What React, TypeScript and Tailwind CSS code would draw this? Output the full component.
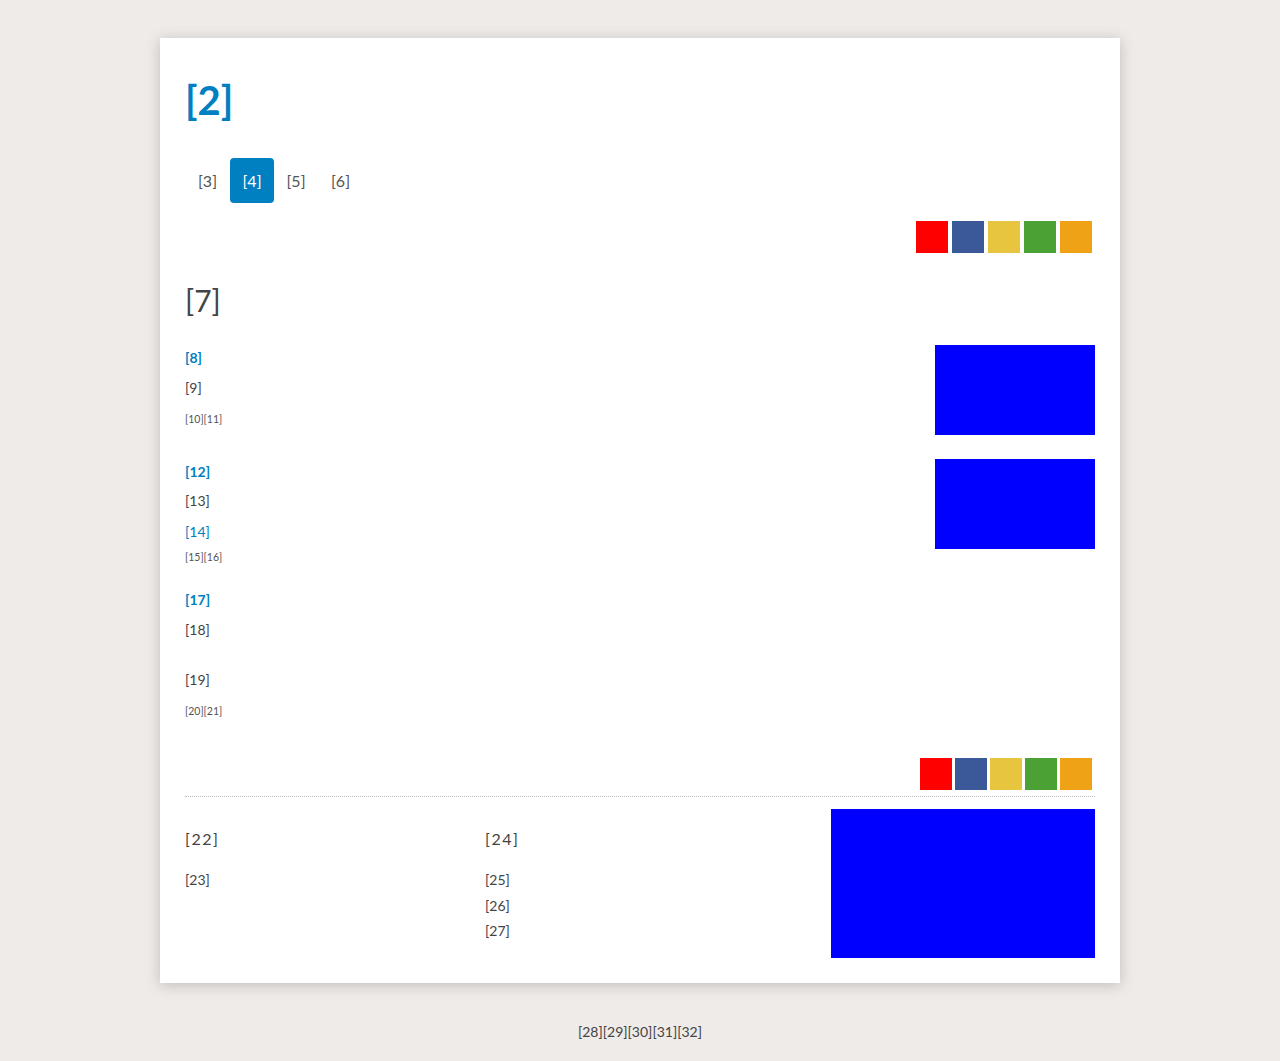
import React from "react";

const swatches = ["bg-[#ff0000]", "bg-[#3b5998]", "bg-[#e8c53f]", "bg-[#4ca134]", "bg-[#f0a216]"];

function Swatches({ gap }: { gap: string }) {
  return (
    <div className={`flex justify-end pr-[3px] ${gap}`}>
      {swatches.map((c) => (
        <span key={c} className={`block w-[32px] h-[32px] ${c}`} />
      ))}
    </div>
  );
}

export default function App() {
  return (
    <div
      className="min-h-screen bg-[#efebe8] pt-[38px] pb-[20px] text-[#444]"
      style={{ fontFamily: "Lato, 'Open Sans', sans-serif" }}
    >
      <div className="mx-auto w-[960px] bg-white px-[25px] pb-[25px] shadow-[0_2px_14px_rgba(0,0,0,0.2)]">
        {/* Title */}
        <h1 className="pt-[38px] text-[40px] font-bold leading-[48px] text-[#0080c0]">[2]</h1>

        {/* Tabs */}
        <nav className="mt-[34px] flex text-[16px] text-[#555]">
          <span className="flex h-[45px] w-[45px] items-center justify-center">[3]</span>
          <span className="flex h-[45px] w-[44px] items-center justify-center rounded-[4px] bg-[#0080c0] text-white">[4]</span>
          <span className="flex h-[45px] w-[44px] items-center justify-center">[5]</span>
          <span className="flex h-[45px] w-[45px] items-center justify-center">[6]</span>
        </nav>

        <div className="mt-[18px]">
          <Swatches gap="gap-[4px]" />
        </div>

        {/* Section heading */}
        <h2 className="mt-[29px] text-[30px] font-normal leading-[36px] text-[#444]">[7]</h2>

        {/* Article 1 */}
        <article className="mt-[27px] flex justify-between">
          <div className="pt-[1px] text-[14px]">
            <p className="leading-[24px] font-bold text-[#0080c0]">[8]</p>
            <p className="mt-[6px] leading-[24px]">[9]</p>
            <p className="mt-[9px] text-[10.5px] leading-[20px] text-[#555]">[10][11]</p>
          </div>
          <div className="h-[90px] w-[160px] bg-[#0000ff]" />
        </article>

        {/* Article 2 */}
        <article className="mt-[24px] flex items-start justify-between">
          <div className="pt-[1px] text-[14px]">
            <p className="leading-[24px] font-bold text-[#0080c0]">[12]</p>
            <p className="mt-[5px] leading-[24px]">[13]</p>
            <p className="mt-[7px] leading-[24px] text-[#0080c0]">[14]</p>
            <p className="mt-[3px] text-[10.5px] leading-[20px] text-[#555]">[15][16]</p>
          </div>
          <div className="h-[90px] w-[160px] bg-[#0000ff]" />
        </article>

        {/* Article 3 */}
        <article className="mt-[21px] text-[14px]">
          <p className="leading-[24px] font-bold text-[#0080c0]">[17]</p>
          <p className="mt-[6px] leading-[24px]">[18]</p>
          <p className="mt-[26px] leading-[24px]">[19]</p>
          <p className="mt-[9px] text-[10.5px] leading-[20px] text-[#555]">[20][21]</p>
        </article>

        <div className="mt-[37px]">
          <Swatches gap="gap-[3px]" />
        </div>

        <div className="mt-[6px] border-t border-dotted border-[#bbb]" />

        {/* Footer columns */}
        <div className="flex pt-[12px]">
          <div className="w-[300px] pt-[18px]">
            <h3 className="text-[16px] leading-[24px] tracking-[1.5px] text-[#444]">[22]</h3>
            <p className="mt-[17px] text-[14px] leading-[24px]">[23]</p>
          </div>
          <div className="w-[300px] pt-[18px]">
            <h3 className="text-[16px] leading-[24px] tracking-[1.5px] text-[#444]">[24]</h3>
            <ul className="mt-[17px] text-[14px]">
              <li className="leading-[24px]">[25]</li>
              <li className="mt-[2px] leading-[24px]">[26]</li>
              <li className="mt-[1px] leading-[24px]">[27]</li>
            </ul>
          </div>
          <div className="ml-auto h-[149px] w-[264px] bg-[#0000ff]" />
        </div>
      </div>

      <footer className="mt-[39px] text-center text-[14px] leading-[20px] text-[#444]">
        [28][29][30][31][32]
      </footer>
    </div>
  );
}
